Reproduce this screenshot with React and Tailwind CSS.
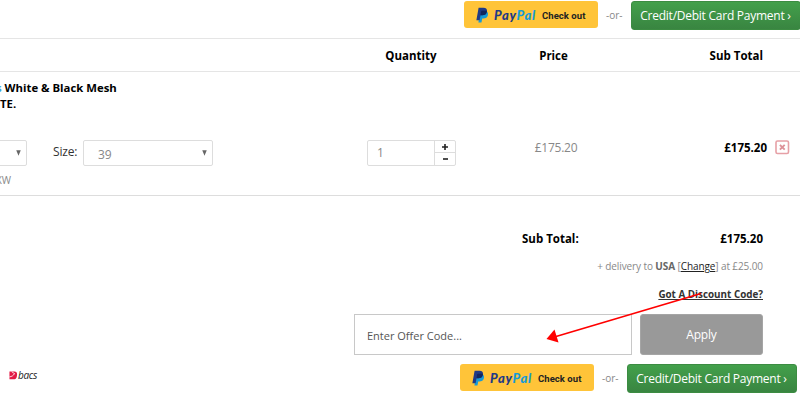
function PayPalMark() {
  return (
    <svg className="h-[16px] w-[13px] shrink-0" viewBox="0 0 14 17">
      <path d="M4.6 4.2h6.2c2 .9 2.5 2.5 2 4.5-.6 2.500-2.400 3.500-4.900 3.500H6.700L5.900 16.500H2.600z" fill="#179bd7" />
      <path d="M2.800.7h5.200c2.900 0 4.300 1.400 3.800 4.100-.5 2.800-2.300 4.100-5.100 4.100H4.900L3.900 14.200H.4z" fill="#1f3a86" />
      <path d="M4.900 8.900h1.800c2.700 0 4.500-1.300 5.100-4.100.2-1-.3-.8-1-1H6.400c-.5 0-.7.300-.8.700z" fill="#12275e" />
    </svg>
  )
}

function PayPalButton() {
  return (
    <button className="flex h-[27px] w-[134px] shrink-0 items-center rounded-[3px] bg-[#ffc439] pl-[12px]">
      <PayPalMark />
      <span className="mt-px ml-[5px] w-[43px] whitespace-nowrap text-left font-['Lato'] text-[13px] leading-none font-black italic tracking-[0.7px] text-[#1f3a86]">
        Pay<span className="text-[#179bd7]">Pal</span>
      </span>
      <span className="mt-[3px] ml-[5px] whitespace-nowrap font-['Roboto'] text-[9.5px] leading-none font-bold tracking-[0.05px] text-[#222]">
        Check out
      </span>
    </button>
  )
}

function CheckoutButtons() {
  return (
    <div className="flex items-start">
      <PayPalButton />
      <span className="w-[32.500px] pt-[7px] text-center text-[10px] leading-[14px] text-[#888]">-or-</span>
      <button className="h-[29px] w-[170px] shrink-0 whitespace-nowrap rounded-[3px] border border-[#3c8c42] bg-linear-to-b from-[#43a04b] to-[#398541] text-[12px] leading-[27px] tracking-[-0.25px] text-white">
        Credit/Debit Card Payment ›
      </button>
    </div>
  )
}

function Select({ className, children }) {
  return (
    <div className={`flex h-[26px] shrink-0 justify-between rounded-[2px] border border-[#ddd] pr-[5px] text-[12px] tracking-[-0.2px] text-[#888] ${className}`}>
      <span className="pt-[5px] leading-[17px]">{children}</span>
      <svg className="mt-[9px] h-[6px] w-[5px]" viewBox="0 0 6 6" preserveAspectRatio="none">
        <path d="M.3.200h5.400L3 5.800z" fill="#666" />
      </svg>
    </div>
  )
}

function Quantity() {
  return (
    <div className="flex h-[26px] w-[89px] rounded-[2px] border border-[#ddd]">
      <span className="w-[67px] border-r border-[#ddd] pt-[4px] pl-[9px] text-[12px] leading-[16px] text-[#888]">1</span>
      <div className="flex flex-1 flex-col items-center">
        <span className="flex h-[12px] w-full items-center justify-center border-b border-[#ddd]">
          <svg className="h-[6px] w-[6px]" viewBox="0 0 6 6">
            <path d="M3 0v6M0 3h6" stroke="#222" strokeWidth="1.600" />
          </svg>
        </span>
        <span className="flex flex-1 items-center">
          <svg className="h-[2px] w-[5px]" viewBox="0 0 5 2">
            <path d="M0 1h5" stroke="#222" strokeWidth="1.600" />
          </svg>
        </span>
      </div>
    </div>
  )
}

function BacsLogo() {
  return (
    <div className="flex items-center">
      <svg className="h-[9px] w-[9px]" viewBox="0 0 9 10">
        <path d="M0 .5h5.500c2 0 3.200 1.200 3 3.500L8.200 6C7.900 8 6.500 9.300 4.500 9.300H0z" fill="#e31b45" />
        <path d="M0 6.500C2.500 6.300 4.500 5 5.500 3M2.500.8l3.500 2.400" fill="none" stroke="#fff" strokeWidth=".9" />
      </svg>
      <span className="text-[10px] leading-[12px] italic tracking-[-0.3px] text-[#222]">bacs</span>
    </div>
  )
}

export default function App() {
  return (
    <div className="relative flex h-[400px] w-[800px] flex-col overflow-hidden bg-white font-['Open_Sans','Noto_Sans',sans-serif] text-black">

      {/* Top checkout buttons */}
      <div className="flex h-[38px] shrink-0 pt-px pl-[464px]">
        <CheckoutButtons />
      </div>

      {/* Table header */}
      <div className="flex h-[34px] shrink-0 items-center border-y border-[#e5e5e5] pt-px text-[11.500px] font-bold">
        <span className="ml-[361px] w-[100px] text-center">Quantity</span>
        <span className="ml-[42px] w-[101px] text-center">Price</span>
        <span className="w-[159px] text-right">Sub Total</span>
      </div>

      {/* Basket item */}
      <div className="flex h-[124px] shrink-0 flex-col border-b border-[#ddd]">
        <div className="h-[68px] pt-[8px] text-[11.350px] leading-[16px] font-bold">
          <p className="-ml-[4px]"><span className="text-[#3ba5dc]">s</span> White &amp; Black Mesh</p>
          <p>TE.</p>
        </div>
        <div className="flex h-[26px]">
          <Select className="-ml-[30px] w-[57px]" />
          <span className="ml-[26px] w-[30px] pt-[3px] text-[12px] leading-[18px] tracking-[-0.2px] text-[#333]">Size:</span>
          <Select className="w-[130px] pl-[14px]">39</Select>
          <div className="ml-[154px]">
            <Quantity />
          </div>
          <span className="ml-[32px] w-[136px] text-center text-[12px] leading-[16px] tracking-[-0.25px] text-[#888]">£175.20</span>
          <span className="w-[143px] text-right text-[11.500px] leading-[16px] font-bold">£175.20</span>
          <svg className="ml-[8px] h-[15px] w-[15px]" viewBox="0 0 15 15">
            <rect x="1" y="1" width="12.500" height="12.500" rx="1.500" fill="#fff" stroke="#e6a0a6" strokeWidth="1.600" />
            <path d="m4.900 4.900 4.800 4.800M9.700 4.900 4.900 9.700" stroke="#dd9299" strokeWidth="1.900" />
          </svg>
        </div>
        <p className="-ml-[4px] mt-[7px] text-[10px] leading-[14px] text-[#888]">XW</p>
      </div>

      {/* Totals */}
      <div className="flex h-[119px] shrink-0 flex-col items-end pt-[34px] pr-[37px]">
        <div className="flex w-[241px] justify-between text-[11.500px] leading-[18px] font-bold">
          <span>Sub Total:</span>
          <span>£175.20</span>
        </div>
        <p className="mt-[11px] text-[10px] leading-[14px] tracking-[-0.1px] text-[#888]">
          + delivery to <b className="text-[#666]">USA</b> [<a className="text-[#222] underline">Change</a>] at £25.00
        </p>
        <a className="mt-[14px] text-[9.850px] leading-[14px] font-bold text-[#333] underline">Got A Discount Code?</a>
      </div>

      {/* Discount code form */}
      <div className="-mt-[1px] flex h-[41px] shrink-0 pl-[354px]">
        <div className="w-[278px] border border-[#c8c8c8] pl-[12px] text-[11px] leading-[41px] text-[#555]">Enter Offer Code...</div>
        <button className="ml-[8px] w-[123px] rounded-[3px] border border-[#a5a5a5] bg-[#999] pt-px text-[12px] tracking-[-0.2px] text-white">Apply</button>
      </div>

      {/* Footer */}
      <div className="flex pt-[9px]">
        <div className="w-[460px] pt-[5px] pl-[9px]">
          <BacsLogo />
        </div>
        <CheckoutButtons />
      </div>

      {/* Arrow pointing at the code field */}
      <svg className="absolute top-[290px] left-[540px] h-[60px] w-[165px]" viewBox="540 290 165 60">
        <path d="M701 293.500 556 336.500" stroke="#f00" strokeWidth="1.700" />
        <path d="m546.500 339 8-9.500 4 13z" fill="#f00" />
      </svg>
    </div>
  )
}
